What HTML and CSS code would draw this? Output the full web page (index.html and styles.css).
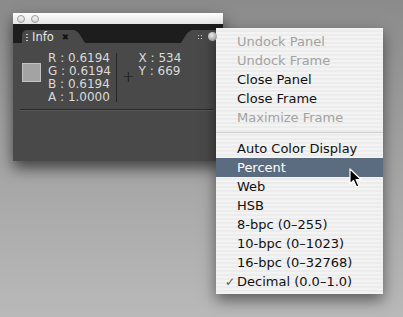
FILE: index.html
```html
<!DOCTYPE html>
<html lang="en">
  <head>
    <meta charset="UTF-8" />
    <title>Info panel menu</title>
    <link rel="stylesheet" href="styles.css">
  </head>
  <body>
    <div class="stage">
      <div class="window">
        <div class="titlebar">
          <span class="dot"></span>
          <span class="dot"></span>
        </div>
        <div class="tabs">
          <div class="tab">
            <span class="grip"></span>
            <span class="tab-label">Info</span>
            <span class="tab-close">&#x2716;</span>
          </div>
          <div class="tab tab-side">
            <span class="grip grip-small"></span>
            <span class="menu-btn"></span>
          </div>
        </div>
        <div class="info-body">
          <div class="readout">
            <div class="swatch"></div>
            <div class="values">
              <div>R : 0.6194</div>
              <div>G : 0.6194</div>
              <div>B : 0.6194</div>
              <div>A : 1.0000</div>
            </div>
            <div class="divider"></div>
            <div class="cross">+</div>
            <div class="values">
              <div>X : 534</div>
              <div>Y : 669</div>
            </div>
          </div>
          <div class="rule"></div>
        </div>
      </div>
    </div>

    <ul class="menu">
      <li class="off">Undock Panel</li>
      <li class="off">Undock Frame</li>
      <li>Close Panel</li>
      <li>Close Frame</li>
      <li class="off">Maximize Frame</li>
      <li class="sep"></li>
      <li>Auto Color Display</li>
      <li class="hot">Percent</li>
      <li>Web</li>
      <li>HSB</li>
      <li>8-bpc (0&ndash;255)</li>
      <li>10-bpc (0&ndash;1023)</li>
      <li>16-bpc (0&ndash;32768)</li>
      <li><span class="check">&#x2713;</span>Decimal (0.0&ndash;1.0)</li>
    </ul>

    <svg class="cursor" width="14" height="20" viewBox="0 0 14 20">
      <path d="M1 1 L1 16 L4.5 12.5 L7.5 19 L10 18 L7 11.5 L12 11.5 Z"
            fill="#000" stroke="#fff" stroke-width="1.2" stroke-linejoin="round" />
    </svg>
  </body>
</html>
```

FILE: styles.css
```css
* {
  box-sizing: border-box;
}
body {
  margin: 0;
  width: 403px;
  height: 317px;
  overflow: hidden;
  background: linear-gradient(#8b8b8b, #a8a8a8 60%, #b9b9b9);
  font-family: "DejaVu Sans", Verdana, sans-serif;
}
.stage {
  padding: 13px 0 0 13px;
}
.window {
  width: 210px;
  box-shadow: 0 7px 14px rgba(0, 0, 0, 0.6);
}
.titlebar {
  height: 11px;
  background: linear-gradient(#fdfdfd, #e6e6e6);
  display: flex;
  align-items: center;
  gap: 6px;
  padding-left: 4px;
}
.dot {
  width: 8px;
  height: 8px;
  border-radius: 50%;
  border: 1px solid #9a9a9a;
  background: linear-gradient(#f4f4f4, #d6d6d6);
}
.tabs {
  height: 19px;
  background: #1d1d1d;
  display: flex;
  justify-content: space-between;
  align-items: flex-end;
  padding-left: 9px;
}
.tab {
  position: relative;
  height: 13px;
  background: #494949;
  border-top-left-radius: 5px;
  display: flex;
  align-items: center;
  padding-left: 4px;
  width: 53px;
}
.tab::after {
  content: "";
  position: absolute;
  top: 0;
  right: -6px;
  width: 14px;
  height: 13px;
  background: #494949;
  border-top-right-radius: 5px;
  transform: skewX(32deg);
}
.tab-side {
  width: 32px;
  border-top-left-radius: 0;
  border-top-right-radius: 0;
  padding-left: 6px;
}
.tab-side::after {
  right: auto;
  left: -6px;
  border-top-right-radius: 0;
  border-top-left-radius: 5px;
  transform: skewX(-32deg);
}
.grip {
  width: 2px;
  height: 8px;
  background: radial-gradient(circle, #c8c8c8 0.7px, transparent 1px) 0 0 / 2px 3px;
  position: relative;
  z-index: 1;
}
.grip-small {
  width: 5px;
  height: 5px;
  background-size: 3px 3px;
}
.tab-label {
  position: relative;
  z-index: 1;
  margin-left: 4px;
  color: #e4e4e4;
  font-size: 11.5px;
}
.tab-close {
  position: relative;
  z-index: 1;
  margin-left: 8px;
  color: #111;
  font-size: 8.5px;
}
.menu-btn {
  margin-left: 6px;
  width: 9px;
  height: 9px;
  border-radius: 50%;
  background: radial-gradient(circle at 40% 35%, #eaeaea, #9c9c9c 70%, #7a7a7a);
  position: relative;
  z-index: 1;
}
.info-body {
  height: 118px;
  background: #494949;
  padding: 9px 0 0 9px;
}
.readout {
  display: flex;
  height: 50px;
  color: #dadada;
  font-size: 12px;
  line-height: 13px;
}
.swatch {
  width: 19px;
  height: 19px;
  margin-top: 11px;
  background: #a3a3a3;
  border: 1px solid #c2c2c2;
}
.values {
  margin-left: 4px;
  white-space: nowrap;
}
.readout .values:nth-child(2) {
  width: 68px;
  margin-left: 7px;
}
.divider {
  width: 1px;
  height: 49px;
  margin-top: 1px;
  background: #262626;
}
.cross {
  margin: 18px 0 0 5px;
  color: #111;
  font-size: 15px;
  line-height: 15px;
  font-weight: 300;
}
.rule {
  margin: 7px 10px 0 -2px;
  height: 2px;
  border-top: 1px solid #2b2b2b;
  border-bottom: 1px solid #575757;
}
.menu {
  position: absolute;
  left: 216px;
  top: 28px;
  width: 167px;
  height: 266px;
  margin: 0;
  padding: 4px 0 3px;
  list-style: none;
  background: repeating-linear-gradient(#f3f3f3 0 2px, #ececec 2px 4px);
  box-shadow: 0 6px 14px rgba(0, 0, 0, 0.5);
  font-size: 13px;
  color: #111;
}
.menu li {
  height: 19px;
  line-height: 19px;
  padding-left: 21px;
  white-space: nowrap;
}
.menu li.off {
  color: #a2a2a2;
}
.menu li.hot {
  background: #5c6c80;
  color: #fff;
}
.menu li.sep {
  height: 12px;
  padding: 0;
  background: linear-gradient(transparent 5px, #d2d2d2 5px 6px, transparent 6px);
}
.check {
  display: inline-block;
  width: 12px;
  margin-left: -12px;
  color: #555;
  font-size: 12px;
}
.cursor {
  position: absolute;
  left: 349px;
  top: 168px;
}
```
